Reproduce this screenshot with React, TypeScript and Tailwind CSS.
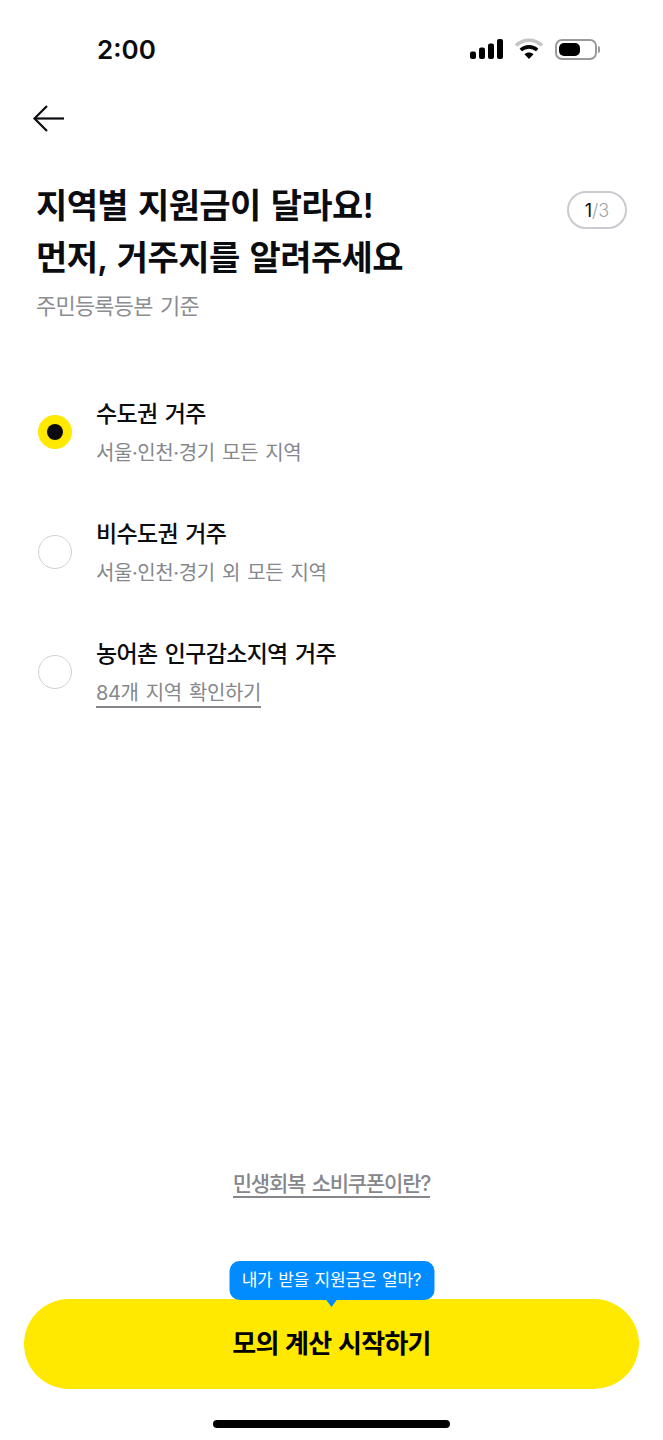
const FONT = "font-['Inter','Noto_Sans_CJK_KR',sans-serif]"

const OPTIONS = [
  { title: '수도권 거주', sub: '서울·인천·경기 모든 지역', selected: true },
  { title: '비수도권 거주', sub: '서울·인천·경기 외 모든 지역' },
  { title: '농어촌 인구감소지역 거주', sub: '84개 지역 확인하기', link: true },
]

function StatusIcons() {
  return (
    <div className="flex items-center gap-[12px]">
      <svg width="33" height="20" viewBox="0 0 33 20" fill="#000">
        <rect x="0" y="12.5" width="6" height="7.5" rx="2" />
        <rect x="9" y="8.5" width="6" height="11.5" rx="2" />
        <rect x="18" y="4.5" width="6" height="15.5" rx="2" />
        <rect x="27" y="0" width="6" height="20" rx="2" />
      </svg>
      <svg width="28" height="22" viewBox="1 0 28 22" fill="none">
        <path d="M2 7.5C9.5 .5 20.5 .5 28 7.5" stroke="#c4c4c4" strokeWidth="3.6" />
        <path d="M6.8 12C11.5 7.8 18.5 7.8 23.2 12" stroke="#000" strokeWidth="3.6" />
        <path d="M10.5 16.2C13 14 17 14 19.5 16.2L15 21Z" fill="#000" />
      </svg>
      <div className="flex items-center gap-[1px]">
        <div className="w-[42px] h-[21px] rounded-[7px] border-2 border-[#9a9a9a] p-[2px]">
          <div className="w-[21px] h-full rounded-[5px] bg-black" />
        </div>
        <div className="w-[2px] h-[7px] rounded-r-full bg-[#9a9a9a]" />
      </div>
    </div>
  )
}

function BackArrow() {
  return (
    <svg width="32" height="27" viewBox="0 0 32 27" fill="none" stroke="#0b0c10" strokeWidth="2.2">
      <path d="M32 13.5H3" />
      <path d="M15 1L2.5 13.5L15 26" />
    </svg>
  )
}

function Radio({ selected }: { selected?: boolean }) {
  if (selected) {
    return (
      <div className="w-[34px] h-[34px] mt-[18px] rounded-full bg-[#ffe900] flex items-center justify-center">
        <div className="w-[16px] h-[16px] rounded-full bg-[#0b0b0f]" />
      </div>
    )
  }
  return <div className="w-[34px] h-[34px] mt-[18px] rounded-full border-[1.5px] border-[#cfd2d7] bg-white" />
}

export default function App() {
  return (
    <div className={`${FONT} relative flex flex-col w-[663px] h-[1440px] bg-white text-[#0b0c10] overflow-hidden`}>
      <div className="flex items-center justify-between h-[36px] mt-[31px] pl-[97px] pr-[63px]">
        <span className="text-[26px] font-semibold">2:00</span>
        <StatusIcons />
      </div>

      <div className="mt-[30px] pl-[32px] h-[42px] flex items-center">
        <BackArrow />
      </div>

      <div className="flex justify-between items-start mt-[41px] pl-[36px] pr-[36px]">
        <div>
          <h1 className="text-[34px] leading-[52px] font-semibold tracking-[-0.6px] [word-spacing:2px]">
            지역별 지원금이 달라요!
            <br />
            먼저, 거주지를 알려주세요
          </h1>
          <p className="mt-[7px] text-[22px] leading-[30px] tracking-[-0.8px] [word-spacing:2px] text-[#8b8d92]">주민등록등본 기준</p>
        </div>
        <div className="mt-[11px] w-[60px] h-[38px] rounded-full border-2 border-[#c8cbd0] flex items-center justify-center text-[18px]">
          <span>1</span>
          <span className="font-light text-[#a0a3a8]">/3</span>
        </div>
      </div>

      <div className="flex flex-col gap-[49px] mt-[76px] pl-[38px]">
        {OPTIONS.map((o) => (
          <div key={o.title} className="flex items-start gap-[24px]">
            <Radio selected={o.selected} />
            <div>
              <div className="text-[23px] leading-[34px] font-medium tracking-[-0.7px] [word-spacing:2px]">{o.title}</div>
              <div className="mt-[7px] h-[30px] leading-[30px] text-[#85878c]">
                <span className={`inline-block text-[20px] tracking-[-0.4px] [word-spacing:2px] ${o.link ? 'border-b-2 border-[#85878c] pt-[3px] leading-[25px]' : ''}`}>{o.sub}</span>
              </div>
            </div>
          </div>
        ))}
      </div>

      <div className="mt-auto flex flex-col items-center">
        <span className="text-[21px] leading-[25px] font-medium tracking-[-1.2px] [word-spacing:2px] text-[#85878c] border-b-2 border-[#85878c]">민생회복 소비쿠폰이란?</span>
        <div className="relative mt-[101px] w-[615px] h-[90px] pb-[1px] rounded-full bg-[#ffe900] flex items-center justify-center text-[26px] font-bold tracking-[-0.7px] [word-spacing:1px] text-black">
          모의 계산 시작하기
          <div className="absolute -top-[38px] left-1/2 -translate-x-1/2 w-[205px] h-[39px] rounded-[10px] bg-[#008cff] flex items-center justify-center text-white text-[17px] tracking-[-0.2px] font-normal">
            내가 받을 지원금은 얼마?
            <div className="absolute -bottom-[7px] left-1/2 -translate-x-1/2 w-0 h-0 border-x-[6px] border-x-transparent border-t-[8px] border-t-[#008cff]" />
          </div>
        </div>
        <div className="mt-[31px] mb-[12px] w-[237px] h-[8px] rounded-full bg-black" />
      </div>
    </div>
  )
}
